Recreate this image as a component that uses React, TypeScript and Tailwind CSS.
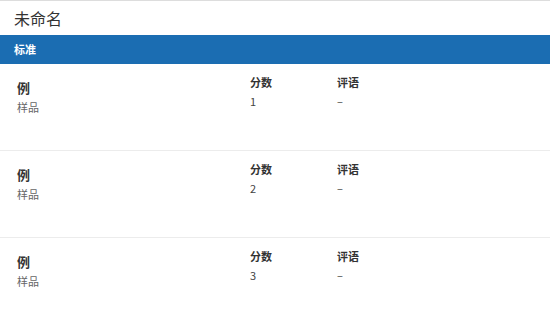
import React from 'react';

const rows = [
  { name: '例', sub: '样品', score: '1', comment: '–' },
  { name: '例', sub: '样品', score: '2', comment: '–' },
  { name: '例', sub: '样品', score: '3', comment: '–' },
];

const font = { fontFamily: '"Noto Sans CJK SC", "Noto Sans", sans-serif' };

export default function App() {
  return (
    <div className="w-[550px] h-[336px] overflow-hidden bg-white text-[#333]" style={font}>
      <div className="h-[35px] border-t border-[#ddd] flex items-center px-[14px] text-[16px] pb-[1px]">
        未命名
      </div>
      <div className="h-[29px] bg-[#1b6db2] flex items-center px-[14px] text-[11px] font-bold text-white">
        标准
      </div>
      {rows.map((r, i) => (
        <div key={i} className="h-[87px] border-b border-[#ececec] last:border-b-0 flex pt-[9px]">
          <div className="w-[250px] pl-[17px] pt-[5px]">
            <div className="text-[13px] font-bold leading-[20px]">{r.name}</div>
            <div className="text-[11px] text-[#666] leading-[18px]">{r.sub}</div>
          </div>
          <div className="w-[87px]">
            <div className="text-[11px] font-bold leading-[18px]">分数</div>
            <div className="text-[11px] text-[#444] leading-[18px] mt-[1px]">{r.score}</div>
          </div>
          <div>
            <div className="text-[11px] font-bold leading-[18px]">评语</div>
            <div className="text-[11px] text-[#444] leading-[18px] mt-[1px]">{r.comment}</div>
          </div>
        </div>
      ))}
    </div>
  );
}
